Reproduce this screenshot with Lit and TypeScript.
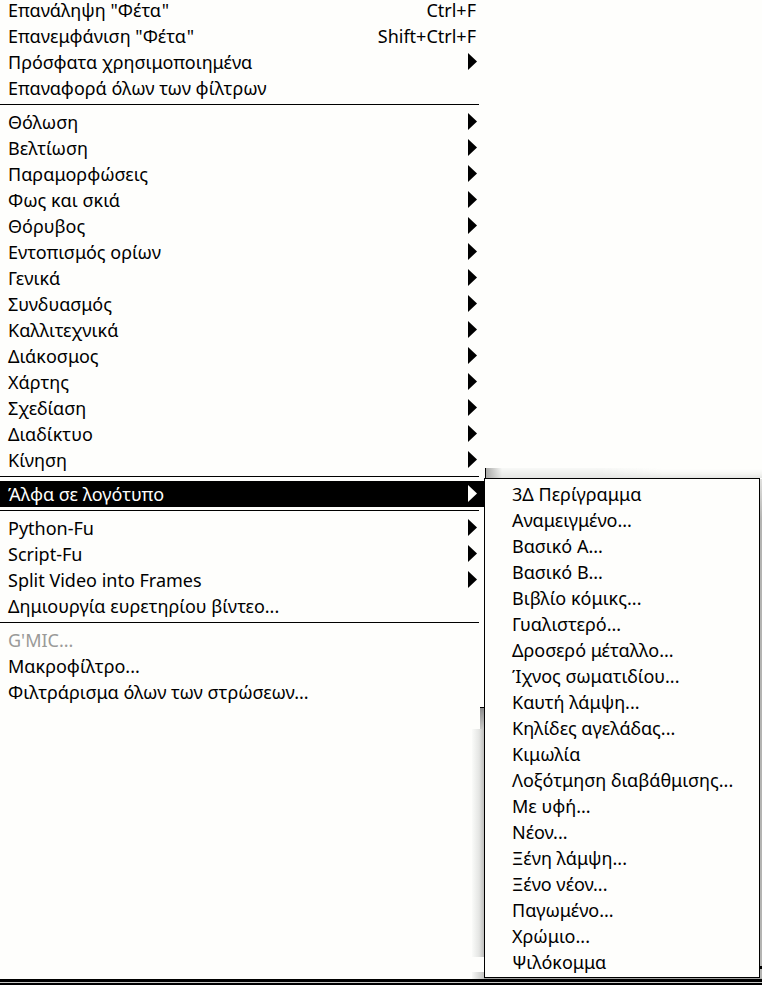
import { LitElement, html, css, nothing } from "lit";
import { customElement } from "lit/decorators.js";
import { classMap } from "lit/directives/class-map.js";

interface Item {
  label: string;
  keys?: string;
  sub?: boolean;
  open?: boolean;
  disabled?: boolean;
}

const sub = (label: string): Item => ({ label, sub: true });

const groups: Item[][] = [
  [
    { label: 'Επανάληψη "Φέτα"', keys: "Ctrl+F" },
    { label: 'Επανεμφάνιση "Φέτα"', keys: "Shift+Ctrl+F" },
    sub("Πρόσφατα χρησιμοποιημένα"),
    { label: "Επαναφορά όλων των φίλτρων" },
  ],
  [
    "Θόλωση", "Βελτίωση", "Παραμορφώσεις", "Φως και σκιά", "Θόρυβος",
    "Εντοπισμός ορίων", "Γενικά", "Συνδυασμός", "Καλλιτεχνικά", "Διάκοσμος",
    "Χάρτης", "Σχεδίαση", "Διαδίκτυο", "Κίνηση",
  ].map(sub),
  [{ label: "Άλφα σε λογότυπο", sub: true, open: true }],
  [
    sub("Python-Fu"),
    sub("Script-Fu"),
    sub("Split Video into Frames"),
    { label: "Δημιουργία ευρετηρίου βίντεο..." },
  ],
  [
    { label: "G'MIC...", disabled: true },
    { label: "Μακροφίλτρο..." },
    { label: "Φιλτράρισμα όλων των στρώσεων..." },
  ],
];

const logoItems = [
  "3Δ Περίγραμμα", "Αναμειγμένο...", "Βασικό Α...", "Βασικό Β...",
  "Βιβλίο κόμικς...", "Γυαλιστερό...", "Δροσερό μέταλλο...",
  "Ίχνος σωματιδίου...", "Καυτή λάμψη...", "Κηλίδες αγελάδας...", "Κιμωλία",
  "Λοξότμηση διαβάθμισης...", "Με υφή...", "Νέον...", "Ξένη λάμψη...",
  "Ξένο νέον...", "Παγωμένο...", "Χρώμιο...", "Ψιλόκομμα",
];

@customElement("app-root")
export class AppRoot extends LitElement {
  static styles = css`
    :host {
      display: block;
      background: #fefefc;
      color: #000;
      font: 18px/26px "Noto Sans", "Open Sans", sans-serif;
      overflow: hidden;
    }
    .menus {
      display: flex;
      align-items: flex-start;
    }
    .main {
      flex: 1;
      min-width: 0;
      margin-top: -3px;
    }
    .item {
      display: flex;
      align-items: center;
      width: 100%;
      height: 26px;
      margin: 0;
      padding: 0 8px;
      border: 0;
      background: none;
      color: inherit;
      font: inherit;
      text-align: left;
      white-space: nowrap;
    }
    .item:disabled {
      color: #9a9a98;
    }
    .item.open {
      background: #000;
      color: #fefefc;
    }
    .label {
      flex: 1;
    }
    .main .item {
      padding-right: 7px;
    }
    .keys {
      padding-right: 1px;
    }
    .arrow {
      width: 9px;
      height: 18px;
      fill: currentColor;
    }
    .rule {
      height: 1px;
      margin: 3px 5px 4px 0;
      border: 0;
      background: #000;
    }
    .sub {
      position: relative;
      box-sizing: border-box;
      width: 276px;
      margin: 478px 2px 1px 0;
      padding: 2px 0;
      border: 1px solid #000;
      background: #fefefc;
    }
    .sub .item {
      padding-left: 27px;
    }
    .shade {
      position: absolute;
    }
    .top {
      left: 0;
      right: -3px;
      bottom: 100%;
      height: 10px;
      margin-bottom: 1px;
      box-sizing: border-box;
      border-left: 1px solid #000;
      background:
        linear-gradient(90deg, #aaaaa8, #aaaaa800 16px),
        linear-gradient(#f8f9f7, #e4e5e3);
    }
    .top::after {
      content: "";
      position: absolute;
      inset: 0 0 0 40%;
      background: linear-gradient(90deg, #fefefc00, #fefefc 40%);
      mask: linear-gradient(#000, #0000);
    }
    .corner {
      top: 228px;
      right: 100%;
      width: 4px;
      height: 22px;
      margin-right: 1px;
      box-sizing: border-box;
      border-top: 1px solid #000;
      background: linear-gradient(#8c8c8c, #c8c8c6);
    }
    .left {
      top: 250px;
      bottom: 20px;
      right: 100%;
      width: 12px;
      margin-right: 1px;
      background: linear-gradient(90deg, #fafbf9, #e4e5e3 60%, #bebebc);
    }
    .foot {
      bottom: -2px;
      right: 100%;
      width: 12px;
      height: 7px;
      margin-right: 1px;
      background: linear-gradient(90deg, #f8f9f7, #c4c4c2);
    }
    .right {
      top: 0;
      bottom: -2px;
      left: 100%;
      width: 2px;
      margin-left: 1px;
      background: linear-gradient(#e0e0de, #b4b4b2 40px);
    }
    .notch {
      bottom: 8px;
      left: 100%;
      width: 2px;
      height: 3px;
      margin-left: 1px;
      background: #000;
    }
    .under {
      left: -1px;
      right: -3px;
      top: 100%;
      height: 1px;
      margin-top: 1px;
      background: #a4a4a2;
    }
    .edge {
      height: 1px;
      border-top: 3px solid #000;
      border-bottom: 2px solid #000;
      background: #c8c8c6;
    }
  `;

  private item(it: Item) {
    return html`<button
      class=${classMap({ item: true, open: !!it.open })}
      role="menuitem"
      ?disabled=${it.disabled}
      aria-haspopup=${it.sub ? "menu" : nothing}
      aria-expanded=${it.sub ? String(!!it.open) : nothing}
    >
      <span class="label">${it.label}</span>
      ${it.keys ? html`<span class="keys">${it.keys}</span>` : nothing}
      ${it.sub
        ? html`<svg class="arrow" viewBox="0 0 9 18" aria-hidden="true">
            <path d="M0 0v17l9-8.5z" />
          </svg>`
        : nothing}
    </button>`;
  }

  render() {
    return html`
      <div class="menus">
        <div class="main" role="menu">
          ${groups.map(
            (g, i) => html`${i ? html`<hr class="rule" />` : nothing}
            ${g.map((it) => this.item(it))}`
          )}
        </div>
        <div class="sub" role="menu" aria-label="Άλφα σε λογότυπο">
          <div class="shade top"></div>
          <div class="shade corner"></div>
          <div class="shade left"></div>
          <div class="shade foot"></div>
          <div class="shade right"></div>
          <div class="shade notch"></div>
          <div class="shade under"></div>
          ${logoItems.map((label) => this.item({ label }))}
        </div>
      </div>
      <div class="edge"></div>
    `;
  }
}
